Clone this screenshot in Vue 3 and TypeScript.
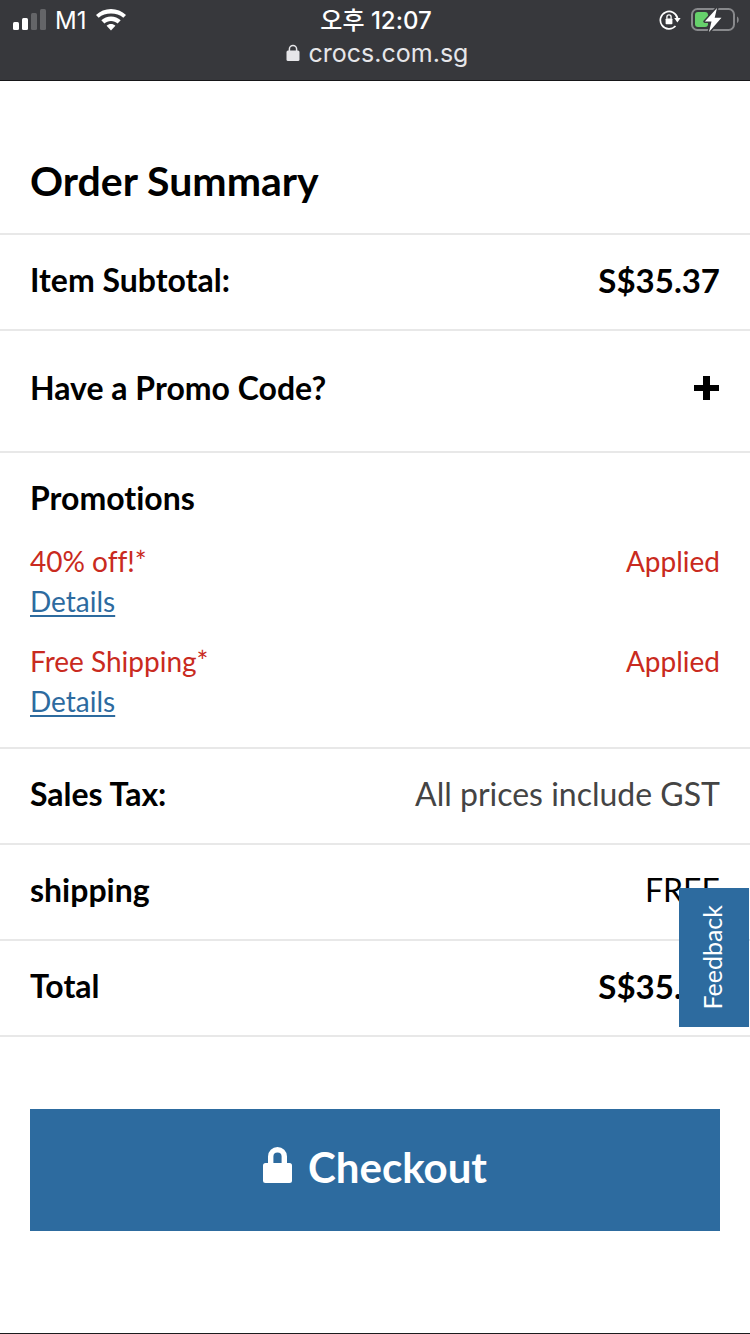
<script setup lang="ts">
import { ref } from 'vue'

interface Promotion {
  id: number
  name: string
  status: string
}

interface SummaryRow {
  label: string
  value: string
  kind: 'strong' | 'muted' | 'plain'
}

const promotions: Promotion[] = [
  { id: 1, name: '40% off!*', status: 'Applied' },
  { id: 2, name: 'Free Shipping*', status: 'Applied' },
]

const totals: SummaryRow[] = [
  { label: 'Sales Tax:', value: 'All prices include GST', kind: 'muted' },
  { label: 'shipping', value: 'FREE', kind: 'plain' },
  { label: 'Total', value: 'S$35.37', kind: 'strong' },
]

const promoOpen = ref(false)
</script>

<template>
  <div class="screen">
    <header class="browser-bar">
      <div class="status">
        <div class="status-left">
          <svg class="signal" width="34" height="22" viewBox="0 0 34 22" aria-hidden="true">
            <rect x="0" y="13" width="6" height="8" rx="1.5" fill="#fff" />
            <rect x="9" y="9" width="6" height="12" rx="1.5" fill="#fff" />
            <rect x="18" y="4" width="6" height="17" rx="1.5" fill="#646568" />
            <rect x="27" y="0" width="6" height="21" rx="1.5" fill="#646568" />
          </svg>
          <span class="carrier">M1</span>
          <svg class="wifi" width="30" height="22" viewBox="0 0 30 22" aria-hidden="true">
            <path d="M15 0C9.300 0 4 2.200 0 6L2.700 8.800C6 5.700 10.300 4.500 15 4.500S24 5.700 27.300 8.800L30 6C26 2.200 20.700 0 15 0Z" fill="#fff" />
            <path d="M15 7.500C11.300 7.500 7.900 8.900 5.300 11.300L8.400 14.400C10.200 12.900 12.400 12 15 12S19.800 12.900 21.600 14.400L24.700 11.300C22.100 8.900 18.700 7.500 15 7.500Z" fill="#fff" />
            <path d="M15 15C13.300 15 11.800 15.600 10.600 16.700L15 21.600L19.400 16.700C18.200 15.600 16.700 15 15 15Z" fill="#fff" />
          </svg>
        </div>
        <time class="clock">오후 12:07</time>
        <div class="status-right">
          <svg width="22" height="22" viewBox="0 0 22 22" aria-hidden="true">
            <path d="M16.500 17A8.700 8.700 0 1 1 18.600 9.500" fill="none" stroke="#fff" stroke-width="1.700" />
            <path d="M15.200 9H21.600L18.400 13.500Z" fill="#fff" />
            <rect x="6.600" y="9.500" width="6.800" height="5.800" rx="0.800" fill="#fff" />
            <path d="M7.900 9.800V7.900A2.100 2.100 0 0 1 12.100 7.900V9.800" fill="none" stroke="#fff" stroke-width="1.300" />
          </svg>
          <svg width="48" height="26" viewBox="0 0 48 26" aria-hidden="true">
            <rect x="1" y="2" width="42" height="21" rx="5.500" fill="none" stroke="#88898c" stroke-width="2" />
            <path d="M46 9.500C48.300 10.500 48.300 14.800 46 15.900Z" fill="#88898c" />
            <rect x="4" y="5" width="13" height="15" rx="3" fill="#66d06b" />
            <path d="M26 1L13.800 14.500H20.500L18 25L30.500 10.800H23.700Z" fill="#fff" stroke="#37383c" stroke-width="3" paint-order="stroke" stroke-linejoin="round" />
          </svg>
        </div>
      </div>
      <div class="address">
        <svg width="14" height="18" viewBox="0 0 14 18" aria-hidden="true">
          <rect x="0.500" y="6.500" width="13" height="10.500" rx="1.500" fill="#e6e6e9" />
          <path d="M3.400 7.500V5A3.600 3.600 0 0 1 10.600 5V7.500" fill="none" stroke="#e6e6e9" stroke-width="1.500" />
        </svg>
        <span>crocs.com.sg</span>
      </div>
    </header>

    <main class="summary">
      <h1 class="title">Order Summary</h1>

      <div class="row">
        <span class="label">Item Subtotal:</span>
        <span class="value strong">S$35.37</span>
      </div>

      <button class="row promo-toggle" type="button" :aria-expanded="promoOpen" @click="promoOpen = !promoOpen">
        <span class="label">Have a Promo Code?</span>
        <svg width="26" height="24" viewBox="0 0 26 24" aria-hidden="true">
          <path d="M9 0H16V9H25V15H16V24H9V15H0V9H9Z" fill="#000" />
        </svg>
      </button>

      <section class="promotions">
        <h2 class="label">Promotions</h2>
        <ul>
          <li v-for="promo in promotions" :key="promo.id">
            <div class="promo-line">
              <span>{{ promo.name }}</span>
              <span>{{ promo.status }}</span>
            </div>
            <a href="#">Details</a>
          </li>
        </ul>
      </section>

      <div v-for="row in totals" :key="row.label" class="row">
        <span class="label">{{ row.label }}</span>
        <span class="value" :class="row.kind">{{ row.value }}</span>
      </div>

      <div class="actions">
        <button class="checkout" type="button">
          <svg width="29" height="40" viewBox="0 0 29 40" aria-hidden="true">
            <rect x="0" y="16" width="29" height="20" rx="2.500" fill="#fff" />
            <path d="M7.700 17V9.500A6.800 6.800 0 0 1 21.300 9.500V17" fill="none" stroke="#fff" stroke-width="5.400" />
          </svg>
          <span>Checkout</span>
        </button>
      </div>
    </main>

    <button class="feedback" type="button"><span>Feedback</span></button>
  </div>
</template>

<style>
body {
  margin: 0;
  background: #fff;
}
</style>

<style scoped>
.screen {
  box-sizing: border-box;
  min-height: 100vh;
  border-bottom: 1px solid #1c1c1e;
  color: #000;
  font-family: Lato, "Liberation Sans", sans-serif;
  font-variant-ligatures: none;
}

button {
  margin: 0;
  border: 0;
  border-radius: 0;
  color: inherit;
  font-family: inherit;
  cursor: pointer;
}

svg {
  display: block;
  flex: none;
}

.browser-bar {
  box-sizing: border-box;
  height: 81px;
  padding: 4px 11px 0 13px;
  border-bottom: 1px solid #161618;
  background: #37383c;
  color: #fff;
  font-family: Inter, "Noto Sans CJK KR", sans-serif;
}

.status {
  display: grid;
  grid-template-columns: 1fr auto 1fr;
  align-items: center;
  height: 32px;
}

.status-left,
.status-right {
  display: flex;
  align-items: center;
}

.status-left {
  gap: 8px;
}

.status-right {
  justify-content: flex-end;
  gap: 10px;
}

.carrier {
  padding: 2px 2px 0 0;
  font-size: 24px;
  line-height: 30px;
}

.clock {
  padding-top: 2px;
  font-size: 24px;
  font-weight: 500;
  line-height: 30px;
}

.address {
  display: flex;
  justify-content: center;
  align-items: center;
  gap: 9px;
  padding-left: 2px;
  color: #e6e6e9;
  font-size: 25px;
  line-height: 34px;
}

.title {
  margin: 0;
  padding: 76px 30px 29px;
  border-bottom: 2px solid #e8e8e8;
  font-size: 41px;
  font-weight: 700;
  line-height: 47px;
}

.row {
  display: flex;
  justify-content: space-between;
  align-items: center;
  box-sizing: border-box;
  width: 100%;
  padding: 25px 30px 29px;
  border-bottom: 2px solid #e8e8e8;
  line-height: 40px;
}

.promo-toggle {
  padding: 37px 30px 43px;
  background: none;
}

.label {
  margin: 0;
  font-size: 32px;
  font-weight: 700;
  line-height: 40px;
}

.value {
  font-size: 32px;
}

.value.strong {
  font-size: 33px;
  font-weight: 700;
}

.muted {
  color: #444;
}

.promotions {
  padding: 25px 30px 26px;
  border-bottom: 2px solid #e8e8e8;
}

.promotions ul {
  display: grid;
  gap: 20px;
  margin: 23px 0 0;
  padding: 0;
  list-style: none;
  font-size: 28px;
  line-height: 40px;
}

.promo-line {
  display: flex;
  justify-content: space-between;
  color: #c92a20;
}

.promotions a {
  display: table;
  color: #2d6b9f;
  text-decoration: underline;
  text-decoration-thickness: 2px;
  text-underline-offset: 3px;
  text-decoration-skip-ink: none;
}

.actions {
  padding: 72px 30px 102px;
}

.checkout {
  display: flex;
  justify-content: center;
  align-items: center;
  gap: 16px;
  width: 100%;
  padding: 33px 30px 39px;
  background: #2d6b9f;
  color: #fff;
  font-size: 42px;
  font-weight: 700;
  line-height: 50px;
}

.feedback {
  position: fixed;
  right: 1px;
  bottom: 307px;
  display: flex;
  justify-content: center;
  align-items: center;
  width: 70px;
  height: 139px;
  padding: 0 4px 0 0;
  background: #2d6b9f;
  color: #fff;
  font-size: 25px;
}

.feedback span {
  writing-mode: vertical-rl;
  transform: rotate(180deg);
}
</style>
